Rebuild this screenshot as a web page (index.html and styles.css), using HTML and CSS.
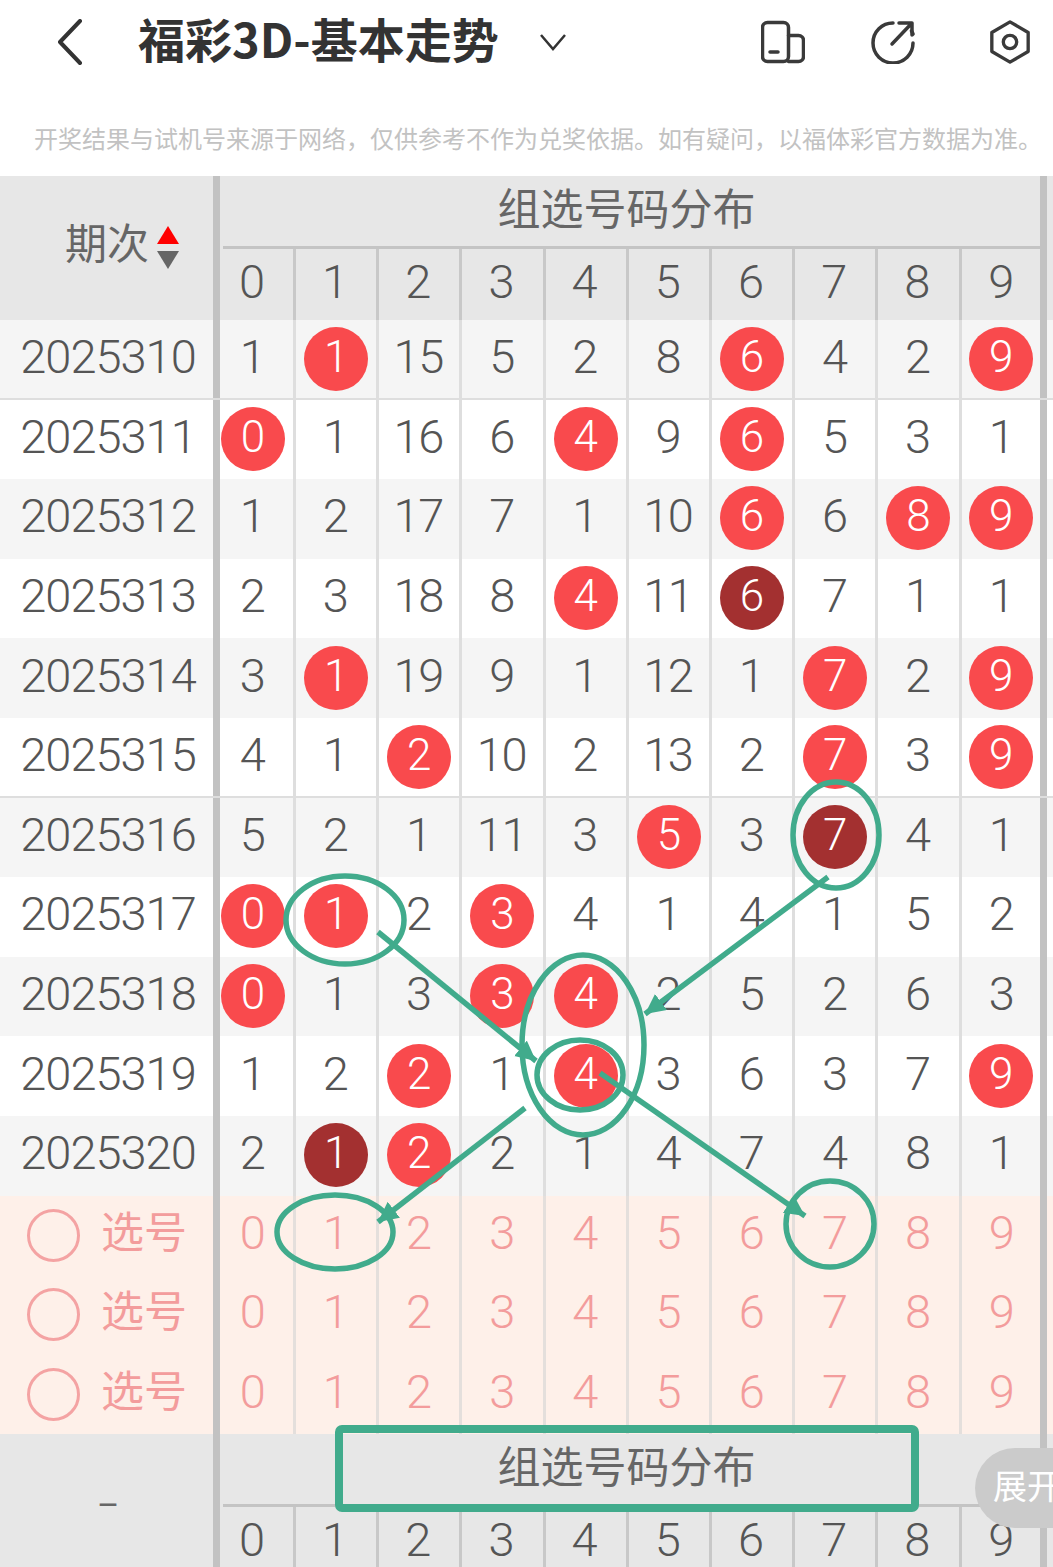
FILE: index.html
```html
<!DOCTYPE html>
<html lang="zh-CN">
<head>
<meta charset="utf-8">
<title>福彩3D-基本走势</title>
<link rel="stylesheet" href="styles.css">
</head>
<body>
<div class="page">
  <header class="nav">
    <svg class="back" viewBox="0 0 26 46"><path d="M23 2 3 23l20 21"/></svg>
    <h1 class="title">福彩3D-基本走势</h1>
    <svg class="caret" viewBox="0 0 28 18"><path d="M2 2l12 14L26 2"/></svg>
    <div class="tools">
      <svg class="tool" viewBox="0 0 44 42"><rect x="1.500" y="1.500" width="26" height="39" rx="5"/><path d="M27.500 14.500h10a5 5 0 0 1 5 5v16a5 5 0 0 1-5 5h-10M9 31h8"/></svg>
      <svg class="tool" viewBox="0 0 44 44"><path d="M22 3a20 20 0 1 0 20 20M42 14a20 20 0 0 0-1.500-3"/><path d="M21 24 41 3M28 3h13v12"/></svg>
      <svg class="tool hex" viewBox="0 0 44 46"><path d="M22 2l19 11v20L22 44 3 33V13z"/><circle cx="22" cy="23" r="7"/></svg>
    </div>
  </header>
  <p class="notice">开奖结果与试机号来源于网络，仅供参考不作为兑奖依据。如有疑问，以福体彩官方数据为准。</p>

  <section class="band">
    <div class="band-left">期次<svg class="sort" viewBox="0 0 22 44"><path class="up" d="M11 0l11 18H0z"/><path class="down" d="M0 25h22L11 43z"/></svg></div>
    <div class="band-main">
      <div class="band-title">组选号码分布</div>
      <div class="digits"><span>0</span><span>1</span><span>2</span><span>3</span><span>4</span><span>5</span><span>6</span><span>7</span><span>8</span><span>9</span></div>
    </div>
  </section>

  <div class="row alt sep"><div class="issue">2025310</div><span>1</span><span><b>1</b></span><span>15</span><span>5</span><span>2</span><span>8</span><span><b>6</b></span><span>4</span><span>2</span><span><b>9</b></span></div>
  <div class="row"><div class="issue">2025311</div><span><b>0</b></span><span>1</span><span>16</span><span>6</span><span><b>4</b></span><span>9</span><span><b>6</b></span><span>5</span><span>3</span><span>1</span></div>
  <div class="row alt"><div class="issue">2025312</div><span>1</span><span>2</span><span>17</span><span>7</span><span>1</span><span>10</span><span><b>6</b></span><span>6</span><span><b>8</b></span><span><b>9</b></span></div>
  <div class="row"><div class="issue">2025313</div><span>2</span><span>3</span><span>18</span><span>8</span><span><b>4</b></span><span>11</span><span><b class="rep">6</b></span><span>7</span><span>1</span><span>1</span></div>
  <div class="row alt"><div class="issue">2025314</div><span>3</span><span><b>1</b></span><span>19</span><span>9</span><span>1</span><span>12</span><span>1</span><span><b>7</b></span><span>2</span><span><b>9</b></span></div>
  <div class="row sep"><div class="issue">2025315</div><span>4</span><span>1</span><span><b>2</b></span><span>10</span><span>2</span><span>13</span><span>2</span><span><b>7</b></span><span>3</span><span><b>9</b></span></div>
  <div class="row alt"><div class="issue">2025316</div><span>5</span><span>2</span><span>1</span><span>11</span><span>3</span><span><b>5</b></span><span>3</span><span><b class="rep">7</b></span><span>4</span><span>1</span></div>
  <div class="row"><div class="issue">2025317</div><span><b>0</b></span><span><b>1</b></span><span>2</span><span><b>3</b></span><span>4</span><span>1</span><span>4</span><span>1</span><span>5</span><span>2</span></div>
  <div class="row alt"><div class="issue">2025318</div><span><b>0</b></span><span>1</span><span>3</span><span><b>3</b></span><span><b>4</b></span><span>2</span><span>5</span><span>2</span><span>6</span><span>3</span></div>
  <div class="row"><div class="issue">2025319</div><span>1</span><span>2</span><span><b>2</b></span><span>1</span><span><b>4</b></span><span>3</span><span>6</span><span>3</span><span>7</span><span><b>9</b></span></div>
  <div class="row alt"><div class="issue">2025320</div><span>2</span><span><b class="rep">1</b></span><span><b>2</b></span><span>2</span><span>1</span><span>4</span><span>7</span><span>4</span><span>8</span><span>1</span></div>

  <div class="row pick"><div class="issue"><i class="radio"></i><em>选号</em></div><span>0</span><span>1</span><span>2</span><span>3</span><span>4</span><span>5</span><span>6</span><span>7</span><span>8</span><span>9</span></div>
  <div class="row pick"><div class="issue"><i class="radio"></i><em>选号</em></div><span>0</span><span>1</span><span>2</span><span>3</span><span>4</span><span>5</span><span>6</span><span>7</span><span>8</span><span>9</span></div>
  <div class="row pick"><div class="issue"><i class="radio"></i><em>选号</em></div><span>0</span><span>1</span><span>2</span><span>3</span><span>4</span><span>5</span><span>6</span><span>7</span><span>8</span><span>9</span></div>

  <section class="band foot">
    <div class="band-left dash">–</div>
    <div class="band-main">
      <div class="band-title">组选号码分布</div>
      <div class="digits"><span>0</span><span>1</span><span>2</span><span>3</span><span>4</span><span>5</span><span>6</span><span>7</span><span>8</span><span>9</span></div>
    </div>
  </section>

  <svg class="marks" viewBox="0 0 1053 1567">
    <defs>
      <marker id="head" markerUnits="userSpaceOnUse" markerWidth="24" markerHeight="24" refX="20" refY="10" orient="auto"><path class="tip" d="M0 0 20 10 0 20z"/></marker>
    </defs>
    <ellipse cx="836" cy="835" rx="43" ry="53"/>
    <ellipse cx="345" cy="920" rx="59" ry="44"/>
    <ellipse cx="583" cy="1045" rx="61" ry="90"/>
    <ellipse cx="580" cy="1075" rx="43" ry="35"/>
    <ellipse cx="335" cy="1232" rx="58" ry="37"/>
    <ellipse cx="830" cy="1224" rx="44" ry="43"/>
    <line x1="378" y1="932" x2="536" y2="1061" marker-end="url(#head)"/>
    <line x1="828" y1="877" x2="645" y2="1014" marker-end="url(#head)"/>
    <line x1="525" y1="1108" x2="378" y2="1222" marker-end="url(#head)"/>
    <line x1="600" y1="1073" x2="805" y2="1216" marker-end="url(#head)"/>
    <rect class="box" x="339" y="1429" width="576" height="79" rx="3"/>
  </svg>
  <div class="pill">展开</div>
</div>
</body>
</html>
```
FILE: styles.css
```css
* { box-sizing: border-box; }
html, body { margin: 0; padding: 0; background: #fff; }
body { font-family: Roboto, "Noto Sans CJK SC", sans-serif; font-weight: 300; color: #555; }
.page { position: relative; width: 1053px; height: 1567px; overflow: hidden; }

.nav { display: flex; align-items: center; height: 84px; padding-left: 57px; }
.back { width: 26px; height: 46px; fill: none; stroke: #333; stroke-width: 4; stroke-linecap: round; stroke-linejoin: round; }
.title { margin: 0 0 10px 55px; font: 700 47px/1 "Noto Sans CJK SC", sans-serif; color: #333; white-space: nowrap; }
.caret { width: 28px; height: 18px; margin-left: 40px; fill: none; stroke: #333; stroke-width: 2.500; }
.tools { display: flex; align-items: center; gap: 66px; margin-left: auto; padding-right: 21px; }
.tool { width: 44px; height: 44px; fill: none; stroke: #3a3a3a; stroke-width: 3.500; stroke-linecap: round; stroke-linejoin: round; }
.hex { margin-left: 7px; }

.notice { display: flex; align-items: center; height: 92px; margin: 0; padding: 16px 0 0 34px; font: 24px/1 "Noto Sans CJK SC", sans-serif; color: #c2c2c2; white-space: nowrap; }

.band { display: grid; grid-template-columns: 220px 827px 1fr; height: 144px; background: #e7e7e7; }
.band-left { display: flex; align-items: center; padding: 0 0 15px 65px; gap: 8px; border-right: 7px solid #c2c2c2; font: 42px/1 "Noto Sans CJK SC", sans-serif; color: #666; }
.sort { width: 22px; height: 44px; margin-top: 15px; }
.up { fill: #f00; }
.down { fill: #666; }
.dash { padding: 0 0 3px 97px; font: 400 34px/1 Roboto, sans-serif; }
.band-main { border-right: 7px solid #c2c2c2; }
.band-title { display: flex; align-items: center; justify-content: center; height: 70px; padding: 0 10px 10px 0; margin-left: 3px; font: 43px/1 "Noto Sans CJK SC", sans-serif; color: #666; }
.digits { display: grid; grid-template-columns: 73px repeat(8, 83.2px) 78.4px; height: 74px; margin-left: 3px; border-top: 3px solid #c4c4c4; font-size: 47px; line-height: 1; }
.digits span { display: flex; align-items: center; justify-content: center; padding: 0 2px 6px 0; border-right: 3px solid #c8c8c8; }
.digits span:first-child { padding-right: 12px; }
.digits span:last-child { border-right: 0; padding: 0 0 6px 1px; }

.row { position: relative; display: grid; grid-template-columns: 220px 76px repeat(8, 83.2px) 85.4px 1fr; height: 79.6px; background: #fff; font-size: 47px; line-height: 1; }
.row.alt { background: #f5f5f5; }
.row.sep::after { content: ""; position: absolute; left: 0; right: 0; bottom: -1.500px; height: 3px; background: #dedede; }
.issue { display: flex; align-items: center; justify-content: center; padding: 0 0 6px 3px; border-right: 7px solid #c2c2c2; letter-spacing: -1px; }
.row > span { display: flex; align-items: center; justify-content: center; padding: 0 2px 6px 0; border-right: 3px solid #dedede; letter-spacing: -1.400px; }
.row > span:nth-child(2) { padding-right: 9px; }
.row > span:last-child { border-right: 7px solid #c2c2c2; padding: 0 0 6px 1px; }
.row b { display: flex; align-items: center; justify-content: center; flex: none; width: 64px; height: 64px; margin: 5px 0 0 2px; padding-bottom: 4px; border-radius: 50%; background: #f94a4d; color: #fff; font-size: 44px; font-weight: 300; letter-spacing: 0; }
.row > span:last-child b { margin-left: 0; }
.row b.rep { background: #a33030; }

.pick, .row.pick { background: #fef0e9; color: #f39c9c; }
.pick > span { border-right-color: #e4dfdc; }
.pick .issue { justify-content: flex-start; gap: 22px; padding: 0 0 0 27px; letter-spacing: 0; }
.radio { width: 53px; height: 53px; border: 3px solid #f4a3a3; border-radius: 50%; }
.pick em { font: 43px/1 "Noto Sans CJK SC", sans-serif; margin-left: -1px; padding-bottom: 12px; }

.marks { position: absolute; left: 0; top: 0; width: 1053px; height: 1567px; fill: none; stroke: #41ab8c; stroke-width: 5.500; }
.marks .tip { fill: #41ab8c; stroke: none; }
.marks .box { stroke-width: 8; }

.pill { position: absolute; left: 975px; top: 1448px; width: 130px; height: 80px; padding: 0 0 6px 18px; border-radius: 40px; background: #cbcbcb; color: #fff; font: 34px/74px "Noto Sans CJK SC", sans-serif; white-space: nowrap; }
```
